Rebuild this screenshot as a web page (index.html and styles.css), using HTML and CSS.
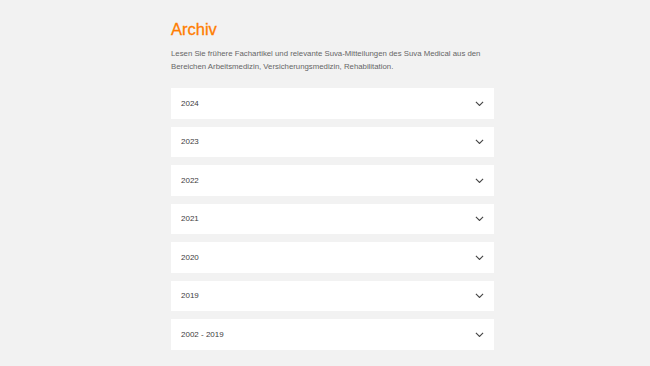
FILE: index.html
```html
<!DOCTYPE html>
<html lang="de">
<head>
  <meta charset="UTF-8">
  <meta name="viewport" content="width=device-width, initial-scale=1.0">
  <title>Archiv - Suva Medical</title>
  <link rel="stylesheet" href="styles.css">
</head>
<body>
  <main class="archive">
    <h1 class="archive-title">Archiv</h1>
    <p class="archive-intro">Lesen Sie frühere Fachartikel und relevante Suva-Mitteilungen des Suva Medical aus den Bereichen Arbeitsmedizin, Versicherungsmedizin, Rehabilitation.</p>

    <ul class="accordion">
      <li class="accordion-item"><span>2024</span><svg class="chevron" viewBox="0 0 10 6"><path d="M1 1l4 4 4-4"/></svg></li>
      <li class="accordion-item"><span>2023</span><svg class="chevron" viewBox="0 0 10 6"><path d="M1 1l4 4 4-4"/></svg></li>
      <li class="accordion-item"><span>2022</span><svg class="chevron" viewBox="0 0 10 6"><path d="M1 1l4 4 4-4"/></svg></li>
      <li class="accordion-item"><span>2021</span><svg class="chevron" viewBox="0 0 10 6"><path d="M1 1l4 4 4-4"/></svg></li>
      <li class="accordion-item"><span>2020</span><svg class="chevron" viewBox="0 0 10 6"><path d="M1 1l4 4 4-4"/></svg></li>
      <li class="accordion-item"><span>2019</span><svg class="chevron" viewBox="0 0 10 6"><path d="M1 1l4 4 4-4"/></svg></li>
      <li class="accordion-item"><span>2002 - 2019</span><svg class="chevron" viewBox="0 0 10 6"><path d="M1 1l4 4 4-4"/></svg></li>
    </ul>
  </main>
</body>
</html>
```

FILE: styles.css
```css
:root {
  --orange: #ff7d00;
  --text-main: #404040;
  --text-secondary: #666666;
  --bg-color: #f2f2f2;
  --card-bg: #ffffff;
}

* {
  box-sizing: border-box;
  margin: 0;
  padding: 0;
}

body {
  font-family: "Liberation Sans", Arial, sans-serif;
  background-color: var(--bg-color);
  color: var(--text-main);
  padding-left: 15px;
}

.archive {
  width: 323px;
  margin: 0 auto;
  padding-top: 19px;
}

.archive-title {
  font-size: 16.5px;
  font-weight: 400;
  color: var(--orange);
  line-height: 20px;
  -webkit-text-stroke: 0.3px var(--orange);
}

.archive-intro {
  margin-top: 8px;
  font-size: 7.8px;
  line-height: 13px;
  color: var(--text-secondary);
}

.accordion {
  list-style: none;
  margin-top: 15px;
  display: flex;
  flex-direction: column;
  gap: 8px;
}

.accordion-item {
  height: 30.5px;
  display: flex;
  align-items: center;
  justify-content: space-between;
  padding: 0 10px;
  background-color: var(--card-bg);
  font-size: 8px;
  color: var(--text-main);
}

.chevron {
  width: 9px;
  height: 5.4px;
  fill: none;
  stroke: #444;
  stroke-width: 1.2;
}
```
